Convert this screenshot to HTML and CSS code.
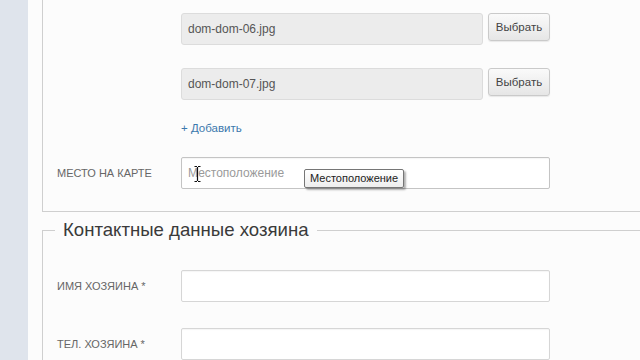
FILE: index.html
```html
<!DOCTYPE html>
<html lang="ru">
<head>
  <meta charset="UTF-8" />
  <meta name="viewport" content="width=device-width, initial-scale=1.0"/>
  <title>Объявление</title>

  <link rel="stylesheet" href="styles.css">
</head>
<body>

<div class="page">

  <fieldset class="section section-photos">
    <div class="form-row first-row">
      <div class="form-label"></div>
      <div class="file-field">
        <div class="file-name">dom-dom-06.jpg</div>
        <button class="btn" type="button">Выбрать</button>
      </div>
    </div>

    <div class="form-row">
      <div class="form-label"></div>
      <div class="file-field">
        <div class="file-name">dom-dom-07.jpg</div>
        <button class="btn" type="button">Выбрать</button>
      </div>
    </div>

    <div class="form-row add-row">
      <div class="form-label"></div>
      <a class="add-link" href="#">+ Добавить</a>
    </div>

    <div class="form-row map-row">
      <label class="form-label" for="map">Место на карте</label>
      <div class="map-field">
        <input class="text-input" id="map" type="text" placeholder="Местоположение" />
        <svg class="ibeam" width="7" height="16" viewBox="0 0 7 16">
          <path d="M0.5 0.5h2.5M4 0.5h2.5M3.5 1v14M0.5 15.5h2.5M4 15.5h2.5" stroke="#111" stroke-width="1.2" fill="none"/>
        </svg>
        <div class="tooltip">Местоположение</div>
      </div>
    </div>
  </fieldset>

  <fieldset class="section section-owner">
    <legend>Контактные данные хозяина</legend>

    <div class="form-row first-row">
      <label class="form-label" for="owner-name">Имя хозяина *</label>
      <input class="text-input" id="owner-name" type="text" />
    </div>

    <div class="form-row phone-row">
      <label class="form-label" for="owner-phone">Тел. хозяина *</label>
      <input class="text-input" id="owner-phone" type="text" />
    </div>
  </fieldset>

</div>

</body>
</html>
```

FILE: styles.css
```css
html, body {
  margin: 0;
  overflow: hidden;
}

body {
  font-family: 'Liberation Sans', Arial, sans-serif;
  background: #dfe4ec;
  color: #333;
  height: 360px;
}

/* page is scrolled: top of the photo block and the right edge are out of view */
.page {
  margin-left: 28px;
  padding-left: 14px;
  background: #fcfcfc;
  height: 360px;
  overflow: hidden;
}

.section {
  margin: 0;
  padding: 0 0 22px 14px;
  border: 1px solid #cfcfcf;
  border-right: none;
  min-width: 0;
}

.section-photos {
  border-top: none;
}

.section-owner {
  margin-top: 7px;
  padding-bottom: 0;
  border-bottom: none;
}

.section legend {
  font-size: 18.6px;
  color: #3a3a3a;
  padding: 0 8px;
  margin-left: -2px;
}

.form-row {
  display: grid;
  grid-template-columns: 124px 369px;
  align-items: center;
  margin-top: 23px;
}

.section-photos .first-row {
  margin-top: 13px;
}

.section-owner .first-row {
  margin-top: 29px;
}

.section-owner .phone-row {
  margin-top: 26px;
}

.add-row {
  margin-top: 21px;
}

.map-row {
  margin-top: 22px;
}

.form-label {
  font-size: 11px;
  text-transform: uppercase;
  color: #666;
}

.file-field {
  display: flex;
  align-items: flex-start;
  gap: 5px;
}

.file-name {
  width: 302px;
  height: 32px;
  box-sizing: border-box;
  background: #ececec;
  border: 1px solid #dcdcdc;
  border-radius: 3px;
  padding: 0 6px;
  font-size: 12px;
  line-height: 30px;
  color: #555;
}

.btn {
  width: 62px;
  height: 28px;
  background: linear-gradient(#fafafa, #e6e6e6);
  border: 1px solid #cacaca;
  border-radius: 3px;
  font-family: 'Liberation Sans', Arial, sans-serif;
  font-size: 11.5px;
  color: #444;
  padding: 0;
  box-shadow: 0 1px 1px rgba(0, 0, 0, 0.08);
}

.add-link {
  font-size: 11.5px;
  line-height: 14px;
  color: #3b78ad;
  text-decoration: none;
}

.text-input {
  width: 369px;
  height: 32px;
  box-sizing: border-box;
  border: 1px solid #d6d6d6;
  border-radius: 2px;
  background: #fff;
  padding: 0 6px;
  font-family: 'Liberation Sans', Arial, sans-serif;
  font-size: 12px;
  color: #444;
  box-shadow: inset 0 1px 1px rgba(0, 0, 0, 0.04);
  outline: none;
}

#map {
  border-color: #c4c4c4;
}

.text-input::placeholder {
  color: #9a9a9a;
}

.map-field {
  position: relative;
  height: 32px;
}

.ibeam {
  position: absolute;
  left: 13px;
  top: 9px;
}

.tooltip {
  position: absolute;
  left: 123px;
  top: 12px;
  padding: 2px 5px;
  font-size: 11px;
  line-height: 13px;
  color: #222;
  background: linear-gradient(#ffffff, #eeeeee);
  border: 1px solid #767676;
  border-radius: 2px;
  box-shadow: 2px 2px 2px rgba(0, 0, 0, 0.3);
  white-space: nowrap;
}
```
